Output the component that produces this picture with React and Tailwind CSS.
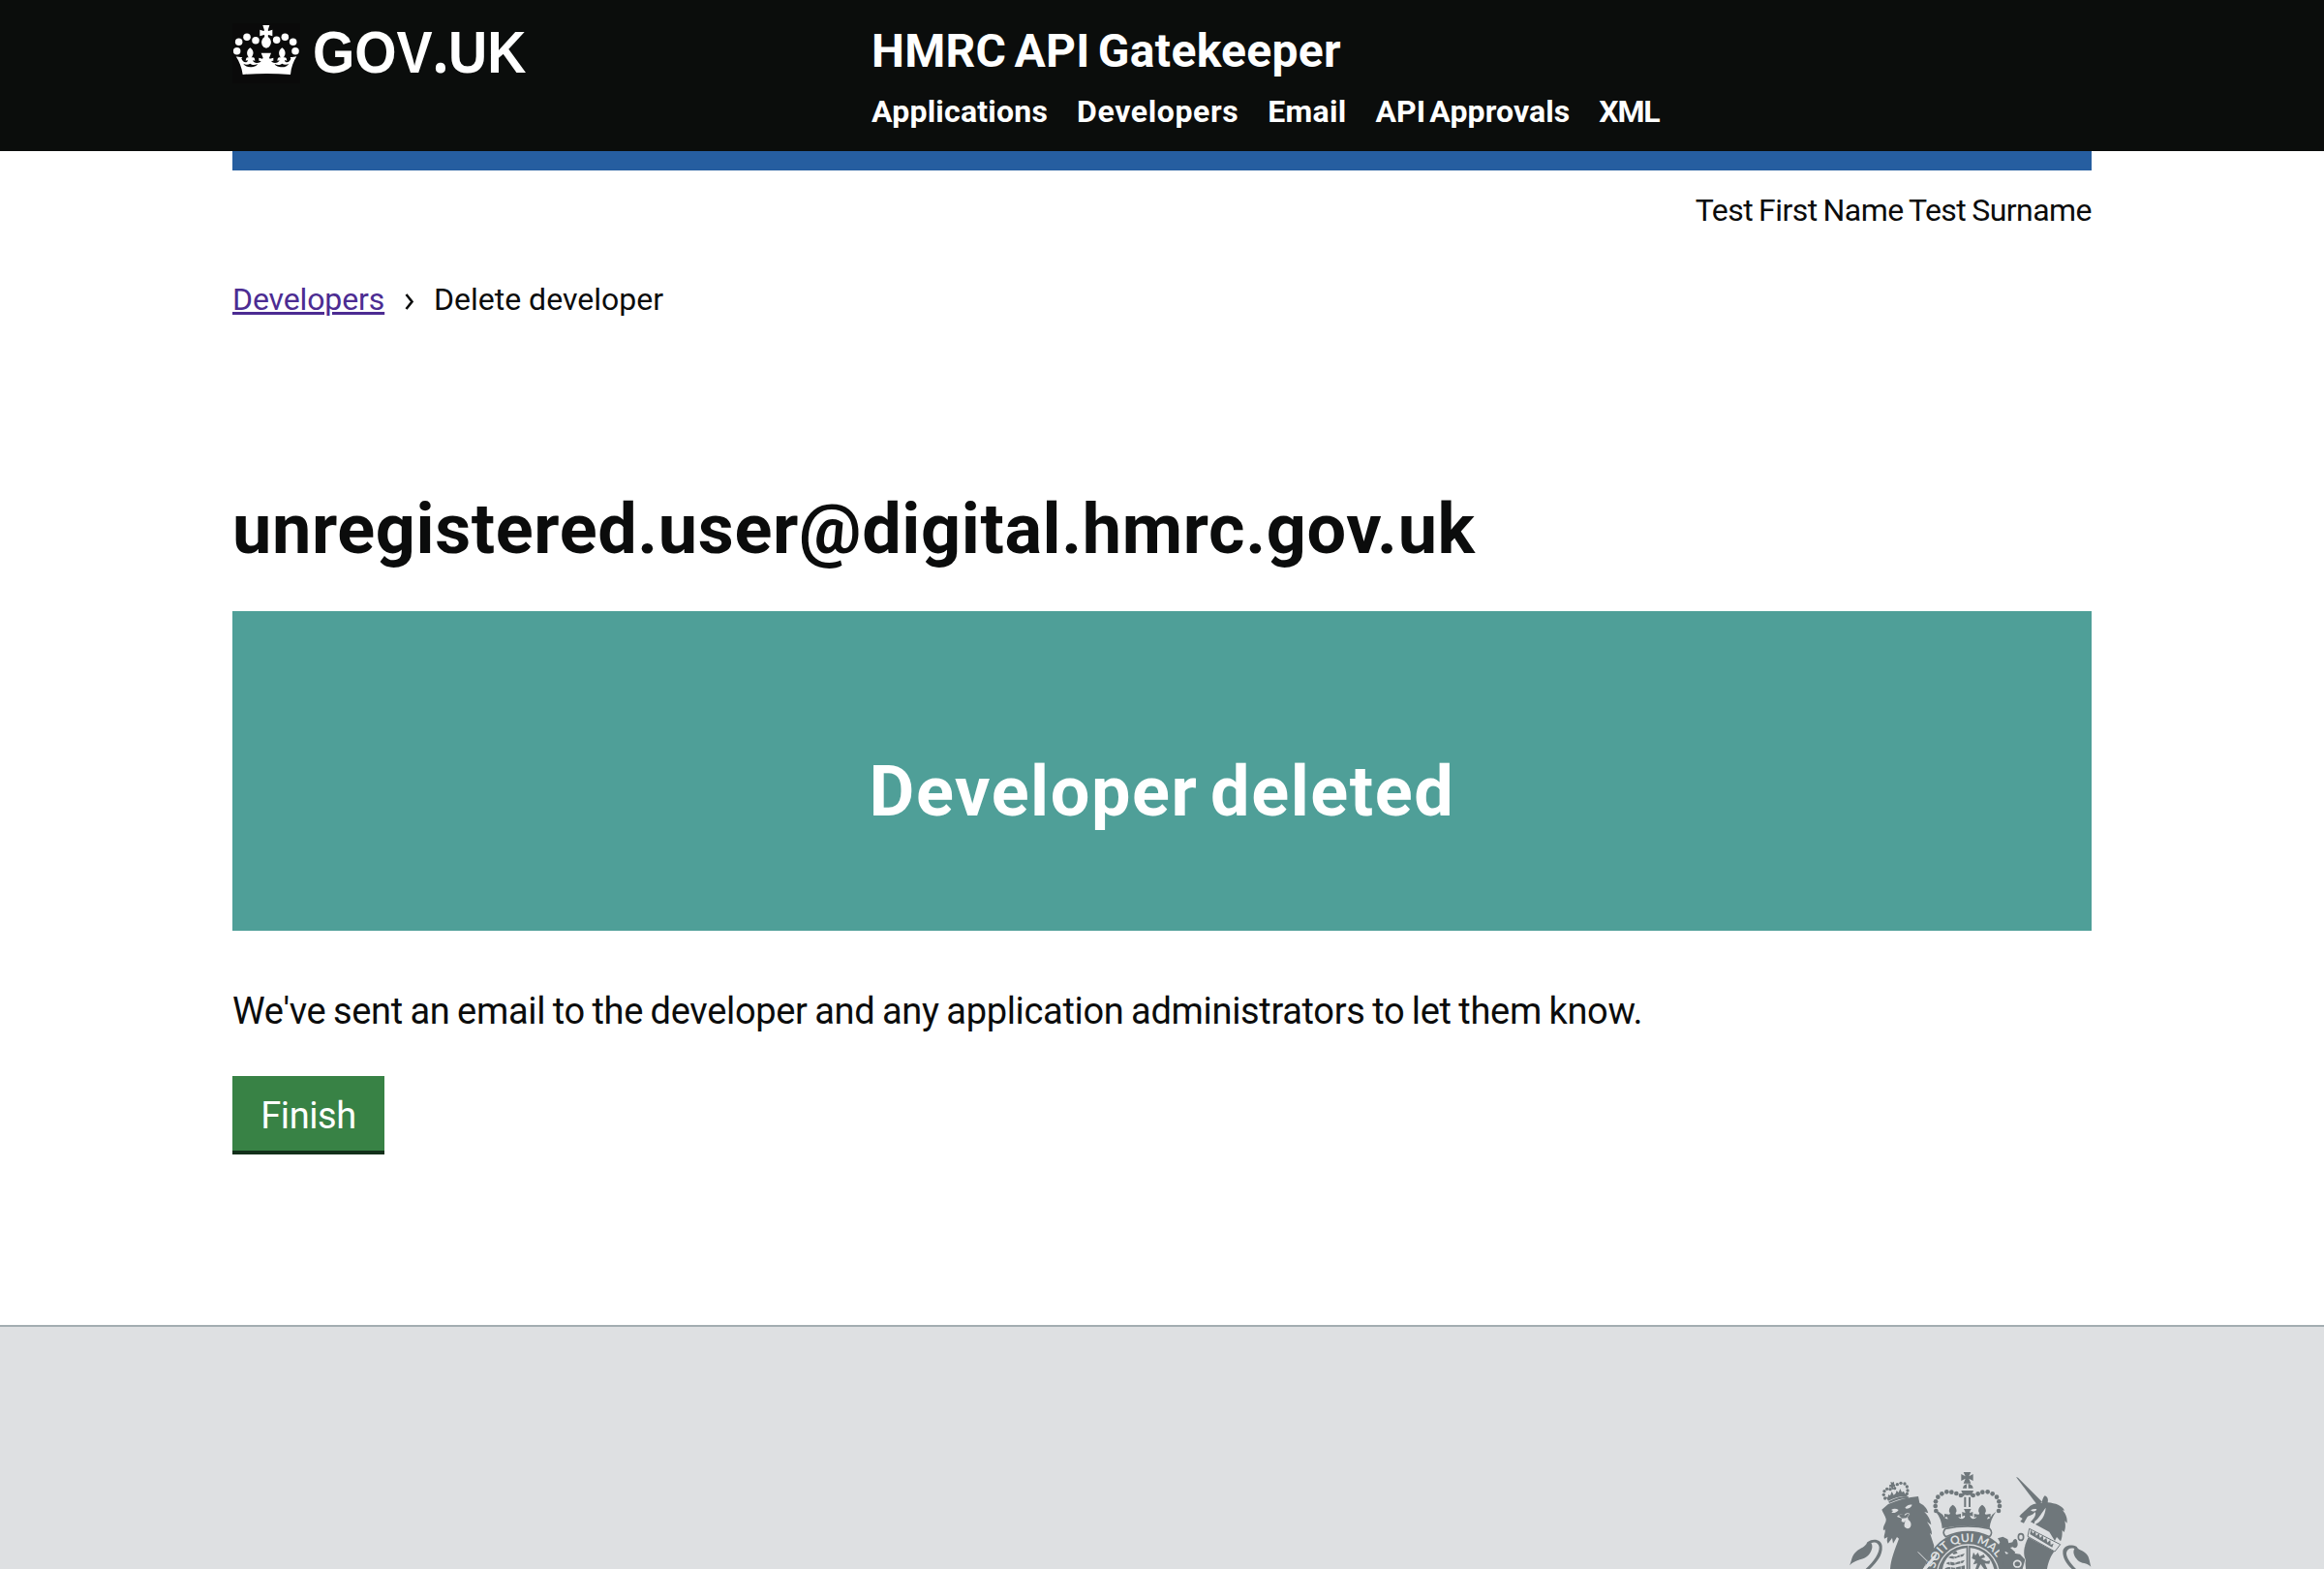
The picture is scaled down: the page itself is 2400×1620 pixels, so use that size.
const dots = (list, r) => list.map(([x, y], i) => <circle key={i} cx={x} cy={y} r={r} />);

function Crown() {
  return (
    <svg viewBox="60 72 210 186" className="h-[62px] w-[70px] bg-[#0a0a0a]" fill="#fff" aria-hidden="true">
      <path d="M154 78h21l-5 16 2 2 12-4v20l-12-4-2 2 1 5c8 6 10 14 8 21-3 10-10 13-14 13s-12-3-14-13c-2-7 0-15 8-21l1-5-2-2-13 4V92l12 4 2-2z" />
      {dots([[80, 130], [105, 115], [132, 125], [197, 124], [223, 115], [248, 130], [74, 158], [255, 158]], 11.3)}
      <path d="M70 175l15 2 6 0-3 4c2 7 6 12 13 12 4 0 7-3 6-7l-6 2 2-8c2-3 7-2 8-1-4-8-7-11-5-19 1-6 5-9 9-12 4 3 8 7 9 12 2 8-2 12-5 19 3-2 9-1 10 3l1 6-7-1c2 6 8 9 14 8 5 0 10-3 12-6l-7-1v-9l11 3 2-3-6-15h31l-6 15 2 3 11-3v9l-7 1c3 4 7 6 12 6 7 0 12-3 14-8l-7 1 1-6c2-4 7-5 10-3-4-7-7-11-5-19 1-5 5-9 9-12 4 3 8 6 9 12 2 8-1 11-5 19 2-1 6-2 9 1l2 8-7-2c0 4 3 7 7 7 6 0 11-5 12-12l-2-4 6 0 14-2c-10 15-17 34-19 56-50-4-98-4-148 0-3-22-11-41-21-56z" />
      <path d="M94 197c5 9 17 13 30 10 8-2 13-5 14-9-8 4-17 4-23-1-6 4-15 4-21 0zM235 197c-5 9-17 13-30 10-8-2-13-5-14-9 8 4 17 4 23-1 6 4 15 4 21 0z" fill="#0a0a0a" />
    </svg>
  );
}

const ARCH = [
  [328, 180], [326, 165], [327, 151], [334, 137], [346, 127], [361, 121], [376, 122], [391, 126], [405, 132],
  [443, 132], [458, 127], [472, 122], [488, 121], [503, 127], [516, 137], [523, 151], [525, 165], [522, 180],
];

function Crest() {
  const bg = "#dee0e2";
  return (
    <svg viewBox="60 0 750 360" className="h-[120px] w-[250px]" fill="#6f777b" aria-hidden="true">
      {/* royal crown */}
      <path d="M413 60h23l-6 13 13-7v21l-13-7 6 15h-23l6-15-13 7V66l13 7zM423 96h5v14h15c-1-8-6-13-15-14-11 1-16 6-17 14h12zM406 117h38c-2 9-8 14-19 15-11-1-17-6-19-15zM415 137h6v31h-6zM429 137h6v31h-6z" />
      {dots(ARCH, 7)}
      {dots([[411, 130], [439, 130]], 5)}
      <path d="M336 182l13 10c4 9 10 14 16 13l-4-7-7 3v-12l14 2c5 0 4-4 1-8-2-8 2-16 11-22 9 6 13 14 11 22-3 4-3 8 2 8l12-2v12l-8-3c3 6 9 8 14 6 5-2 8-6 6-10l-8 3v-14l9 3c2-2-2-8-4-12h23c-2 4-6 10-4 12l9-3v14l-8-3c-1 4 2 8 6 10 5 2 11 0 14-6l-8 3v-12l12 2c5 0 5-4 2-8-2-8 2-16 11-22 9 6 13 14 11 22-3 4-4 8 1 8l14-2v12l-7-3-4 7c6 1 12-4 16-13l12-10c-11 15-19 33-20 52-49-10-98-10-147 0-1-19-7-37-20-52z" />
      {/* garter and shield */}
      <circle cx="427" cy="381" r="141" fill={bg} />
      <circle cx="427" cy="381" r="136" />
      <circle cx="427" cy="381" r="98" fill={bg} />
      <circle cx="427" cy="381" r="94" />
      <path d="M357 235c46-10 92-10 137 0 8 8 7 18 0 25-44-20-91-20-136 0-8-7-9-17-1-25z" fill={bg} stroke="#6f777b" strokeWidth="5" />
      <path id="garter" d="M322 381a105 105 0 0 1 210 0" fill="none" />
      <text fill={bg} className="text-[36px] font-bold [font-family:Lato,sans-serif]">
        <textPath href="#garter" startOffset="22" textLength="248">SOIT QUI MAL</textPath>
      </text>
      <path d="M348 360c6-34 30-60 74-65v65zM434 295c40 4 66 30 74 65h-74z" fill={bg} />
      <path d="M428 285v75" stroke={bg} strokeWidth="2" />
      <path d="M366 325c14-12 20 3 31-7l20-6-6 9-18 4c-8 6-20 2-27 0zM359 343c14-11 24 3 35-5l23-6-6 9-20 5c-10 6-22 2-32-3zM356 358c16-9 24 2 38-4l23-5v11h-61zM378 310l12-6 5 7-12 4zM444 308l6 10 8-9 5 12 13-6 4 9-12 4 16 8 12-2-3 10-14-1 8 17h-10l-11-15-7 15h-9l6-17-13 3 7-14-11-5z" />
      <path d="M384 322l5 38M402 314l4 46M370 332l4 28" stroke={bg} strokeWidth="2" />
      {/* lion */}
      <path d="M181 151c20-11 39-16 61-16l1 5c-21 1-40 6-60 16z" />
      {dots([[170, 141], [166, 130], [168, 119], [176, 112], [186, 113], [200, 110], [208, 98], [219, 94], [231, 96], [238, 105], [240, 117], [238, 127]], 5)}
      <path d="M187 90l6 2 4-3 2 9 3 1-2 7-5-1 1 8-5 1-2-8-5 1-1-7 6-2zM172 136l6 3 3-10 5 4 5-13 6 11 6-5 3-9 6 6 5-12 5 11 6-3 4 9 7-6-1 13c-20-1-40 4-58 14z" />
      <path d="M160 176l20-17c32-14 62-21 93-24l4 20c18 9 24 20 27 32l-12-4c12 12 19 24 21 40l-13-9c9 13 16 26 15 40l-6-6 13 40-2 14 12-14-27 36-16 36H186c2-30 14-60 27-94l-6-5-12 20-3-17-13 17c-4-7-3-12-1-20l-10 5c-3-10 4-18 2-28l-5 2c-3-14 10-22 8-35-3-12-9-18-13-29z" />
      <path d="M189 177c8-5 16-4 23 0-7 9-15 11-22 8l5-5zM232 170c7-8 15-11 22-9-3 8-10 12-18 12zM207 198c9-10 18-6 22-3 3-9 12-10 18-6l-7 10 2 8c9 7 11 16 6 24-6 6-14 4-18-2-2-8 3-13 2-20l-3 7-8-3 1-10z" fill={bg} />
      <path d="M212 194c8-5 15-3 20 0 4-5 9-6 13-5l-8 13-14 1z" />
      <path d="M330 310l-42 50h10l28-35zM272 307l30 30" fill={bg} stroke={bg} strokeWidth="3" />
      <path d="M60 349c8-16 5-29 21-43 14-12 27-12 34-29 21-15 45-6 46 13 2 28-17 49-38 70h-13c26-24 43-49 42-68-2-14-15-18-25-12 7 10 2 24-7 36-14 17-40 12-60 33z" />
      {/* unicorn */}
      <path d="M576 75l6 2 75 75-15 10z" />
      <path d="M590 192l30-28c12-7 22-8 36-9 1-8 3-16 9-22 10 3 11 14 9 21 24 2 45 10 52 25l-6-1c12 13 15 27 14 40l-7-7c3 16 2 24-2 35l-6-6c0 15 0 22-5 34l-12-13-6 12-17-28-58-31c16-14 18-28 13-30-8 12-18 9-24 16l-10 18-11-5 7-9-10-7 4-4z" />
      <path d="M621 178c7-4 13-5 19-3-2 6-8 8-14 6zM634 212c14-9 21-27 34-42-2 25-13 44-37 54zM606 211l10-7 7 1-6 8z" fill={bg} />
      <path d="M614 262l80 43c-10 15-18 30-22 55h-66c0-10-3-18 0-28-8-15-8-40 8-70z" />
      <path d="M617 235l96 49-17 22-84-47z" fill={bg} stroke="#6f777b" strokeWidth="3" />
      <path d="M619 252l3-14 6 12 8-8 2 15 9-7 3 14 9-8 2 15 9-7 3 14 9-8 1 15 9-4-4 12z" />
      <path d="M519 265l16-5 15 8 3 12 12-3c4-12 14-14 15 0 4 14-5 22-14 15l-8 2 16 14-9 12-21-14-16 7-8-24 6-12z" />
      <path d="M532 318l28-8 28 4 16 17-8 29h-44l-16-9z" />
      <circle cx="591" cy="261" r="15" fill={bg} />
      <ellipse cx="591" cy="261" rx="8" ry="10" fill="none" stroke="#6f777b" strokeWidth="5" />
      <ellipse cx="580" cy="344" rx="11" ry="10" stroke={bg} strokeWidth="5" />
      <path d="M603 288l-22 14-6 8" fill="none" stroke={bg} strokeWidth="4" />
      <path d="M808 353c-6-20-4-34-20-45-12-8-20-8-24-17-20-10-42-3-43 15-1 18 10 38 28 54h13c-21-20-31-38-30-50 2-13 14-17 25-13-7 12 0 25 10 36 12 12 28 6 41 20z" />
    </svg>
  );
}

const NAV = [
  ["Applications", "tracking-[0.22px]"],
  ["Developers", "tracking-[0.6px]"],
  ["Email", "tracking-[0.3px]"],
  ["API Approvals", "tracking-[0.1px] [word-spacing:-4px]"],
  ["XML", "tracking-[-1.2px]"],
];

export default function App() {
  return (
    <div className="flex h-[1620px] flex-col overflow-hidden bg-white text-[#0b0c0c] [font-family:Roboto,sans-serif]">
      <header className="h-[156px] shrink-0 bg-[#0b0d0c] px-[240px] text-white">
        <div className="flex">
          <a href="#" className="flex w-[660px] pt-6">
            <Crown />
            <span className="ml-[13px] mt-[-5px] origin-left scale-x-[0.912] text-[61px] font-bold leading-[70px] [font-family:'Liberation_Sans',sans-serif]">
              GOV<span className="text-[64px] leading-none [font-family:'Noto_Sans',sans-serif]">.</span>UK
            </span>
          </a>
          <div className="pt-[27px]">
            <a href="#" className="block text-[48px] font-bold leading-[52px] tracking-[0.3px] [word-spacing:-4px]">HMRC API Gatekeeper</a>
            <nav className="mt-4 flex gap-[30px] text-[32px] font-bold leading-10">
              {NAV.map(([label, cls]) => <a key={label} href="#" className={cls}>{label}</a>)}
            </nav>
          </div>
        </div>
      </header>
      <main className="h-[1212px] shrink-0 px-[240px]">
        <div className="h-5 bg-[#265ea0]" />
        <p className="mt-[21px] text-right text-[32px] leading-10 tracking-[-0.54px] [word-spacing:-1.5px]">Test First Name Test Surname</p>
        <nav className="mt-[52px] flex items-center text-[32px] leading-10">
          <span className="w-[157px]">
            <a href="#" className="tracking-[-0.12px] text-[#4c2c92] underline decoration-[3px] underline-offset-[2px]">Developers</a>
          </span>
          <svg viewBox="0 0 10 17" className="ml-[21px] mr-5 mt-1 h-[17px] w-[10px]" fill="none" stroke="#0b0c0c" strokeWidth="2.6">
            <path d="M1.5 1l6 7.5-6 7.5" />
          </svg>
          <span>Delete developer</span>
        </nav>
        <h1 className="mt-[178px] text-[72px] font-bold leading-[80px] tracking-[0.63px]">unregistered.user@digital.hmrc.gov.uk</h1>
        <div className="mt-11 h-[330px] bg-[#4f9f98] pt-[147px] text-center text-white">
          <h2 className="text-[72px] font-bold leading-[80px] tracking-[1.6px] [word-spacing:-7px]">Developer deleted</h2>
        </div>
        <p className="mt-[57px] pt-0.5 text-[38px] leading-[48px] tracking-[-0.32px] [word-spacing:-1.5px]">
          We've sent an email to the developer and any application administrators to let them know.
        </p>
        <button className="mt-[43px] block h-[81px] w-[157px] border-b-4 border-[#13301a] bg-[#388245] pt-[5px] text-[38px] leading-[48px] tracking-[-0.4px] text-white">Finish</button>
      </main>
      <footer className="flex h-[252px] shrink-0 items-end justify-end border-t-2 border-[#a3adb1] bg-[#dee0e2] px-[240px]">
        <Crest />
      </footer>
    </div>
  );
}
